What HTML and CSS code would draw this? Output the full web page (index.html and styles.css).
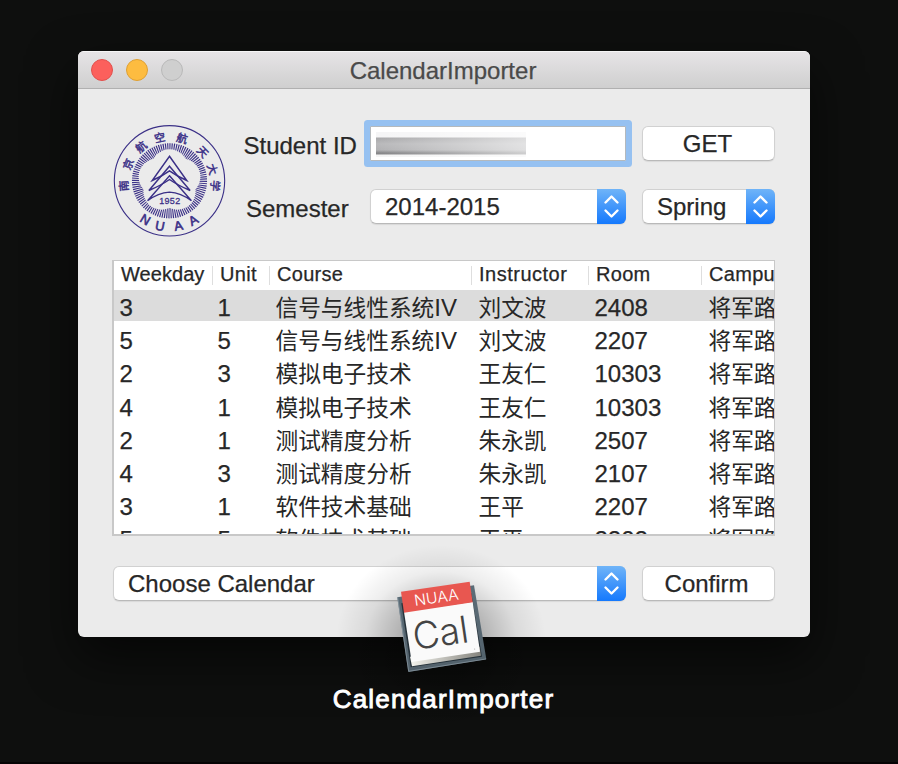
FILE: index.html
```
<!DOCTYPE html>
<html lang="en">
<head>
<meta charset="utf-8">
<title>CalendarImporter</title>
<link rel="stylesheet" href="styles.css">
</head>
<body>
<main class="window">
  <header class="titlebar">
    <div class="lights"><i class="light close"></i><i class="light minimize"></i><i class="light disabled"></i></div>
    <h1 class="title">CalendarImporter</h1>
  </header>
  <section class="form">
    <svg class="logo" viewBox="24 30 340 340">
      <g fill="none" stroke="#3b3087">
        <circle cx="194" cy="198" r="166" stroke-width="3.4"/>
        <circle cx="194" cy="198" r="97" stroke-width="32" stroke-dasharray="3.2 2.88"/>
      </g>
      <g fill="#ebebeb">
        <circle cx="194" cy="198" r="60"/>
        <circle cx="194" cy="158" r="55"/><circle cx="232" cy="186" r="55"/><circle cx="156" cy="186" r="55"/>
        <circle cx="217.500" cy="230" r="55"/><circle cx="170.500" cy="230" r="55"/>
      </g>
      <g fill="none" stroke="#3b3087" stroke-width="4.400">
        <path d="M194 124 246 197Q216 184 194 168Q172 184 142 197Z"/>
        <path d="M194 154 256 227Q220 212 194 194Q168 212 132 227Z"/>
        <path d="M194 183 260 258Q228 234 194 232Q160 234 128 258Z"/>
      </g>
      <g class="logo-text">
        <text class="year" x="195" y="267">1952</text>
        <text class="hanzi" transform="translate(57 213) rotate(-94)" y="12">南</text>
        <text class="hanzi" transform="translate(70 148) rotate(-68)" y="12">京</text>
        <text class="hanzi" transform="translate(109 96) rotate(-40)" y="12">航</text>
        <text class="hanzi" transform="translate(165 68) rotate(-12)" y="12">空</text>
        <text class="hanzi" transform="translate(232 70) rotate(16)" y="12">航</text>
        <text class="hanzi" transform="translate(294 111) rotate(46)" y="12">天</text>
        <text class="hanzi" transform="translate(323 163) rotate(72)" y="12">大</text>
        <text class="hanzi" transform="translate(331 213) rotate(94)" y="12">学</text>
        <text class="nuaa" transform="translate(121 315) rotate(31)" y="13">N</text>
        <text class="nuaa" transform="translate(165 334) rotate(11)" y="13">U</text>
        <text class="nuaa" transform="translate(221 334) rotate(-11)" y="13">A</text>
        <text class="nuaa" transform="translate(266 317) rotate(-30)" y="13">A</text>
      </g>
    </svg>
    <div class="fields">
      <label class="label id-label">Student ID</label>
      <div class="input"><span class="redacted"></span></div>
      <button class="button">GET</button>
      <label class="label semester-label">Semester</label>
      <div class="select">2014-2015<span class="stepper"><svg viewBox="0 0 28 35"><path d="M8 13.500 14 7.500 20 13.500M8 21.500 14 27.500 20 21.500"/></svg></span></div>
      <div class="select">Spring<span class="stepper"><svg viewBox="0 0 28 35"><path d="M8 13.500 14 7.500 20 13.500M8 21.500 14 27.500 20 21.500"/></svg></span></div>
    </div>
  </section>
  <section class="table">
    <div class="row head"><span>Weekday</span><span>Unit</span><span>Course</span><span>Instructor</span><span>Room</span><span>Campus</span></div>
    <div class="row selected"><span>3</span><span>1</span><span class="cjk">信号与线性系统<b>IV</b></span><span class="cjk">刘文波</span><span>2408</span><span class="cjk">将军路</span></div>
    <div class="row"><span>5</span><span>5</span><span class="cjk">信号与线性系统<b>IV</b></span><span class="cjk">刘文波</span><span>2207</span><span class="cjk">将军路</span></div>
    <div class="row"><span>2</span><span>3</span><span class="cjk">模拟电子技术</span><span class="cjk">王友仁</span><span>10303</span><span class="cjk">将军路</span></div>
    <div class="row"><span>4</span><span>1</span><span class="cjk">模拟电子技术</span><span class="cjk">王友仁</span><span>10303</span><span class="cjk">将军路</span></div>
    <div class="row"><span>2</span><span>1</span><span class="cjk">测试精度分析</span><span class="cjk">朱永凯</span><span>2507</span><span class="cjk">将军路</span></div>
    <div class="row"><span>4</span><span>3</span><span class="cjk">测试精度分析</span><span class="cjk">朱永凯</span><span>2107</span><span class="cjk">将军路</span></div>
    <div class="row"><span>3</span><span>1</span><span class="cjk">软件技术基础</span><span class="cjk">王平</span><span>2207</span><span class="cjk">将军路</span></div>
    <div class="row"><span>5</span><span>5</span><span class="cjk">软件技术基础</span><span class="cjk">王平</span><span>2202</span><span class="cjk">将军路</span></div>
  </section>
  <footer class="actions">
    <div class="select">Choose Calendar<span class="stepper"><svg viewBox="0 0 28 35"><path d="M8 13.500 14 7.500 20 13.500M8 21.500 14 27.500 20 21.500"/></svg></span></div>
    <button class="button">Confirm</button>
  </footer>
</main>
<div class="app-shadow"></div>
<svg class="app-icon" viewBox="0 0 420 375">
  <defs>
    <linearGradient id="pages" x1="0" y1="0" x2="1" y2="0"><stop offset="0" stop-color="#f4f4ee"/><stop offset="1" stop-color="#85847e"/></linearGradient>
    <linearGradient id="back" x1="0" y1="0" x2="0" y2="1"><stop offset="0" stop-color="#5b6c77"/><stop offset="1" stop-color="#52616b"/></linearGradient>
  </defs>
  <path d="M82 112 312 76 349 298 115 336Z" fill="url(#back)"/>
  <path d="M83 112 116 334 348 297" fill="none" stroke="#84939c" stroke-width="2.500"/>
  <path d="M94 130 122 322 336 290 304 100Z" fill="#26323a"/>
  <path d="M120 290 126 319 333 287 329 260Z" fill="url(#pages)"/>
  <path d="M102 155 308 125 330 275 125 306Z" fill="#fafafa"/>
  <path d="M93 95 299 65 308 127 102 158Z" fill="#e85750"/>
  <text class="icon-nuaa" transform="translate(135 138) rotate(-8.300)" textLength="134" lengthAdjust="spacingAndGlyphs">NUAA</text>
  <text class="icon-cal" transform="translate(134 270) rotate(-8.300)" textLength="168" lengthAdjust="spacingAndGlyphs">Cal</text>
  <circle cx="314" cy="267" r="1.500" fill="#999"/>
</svg>
<p class="app-name">CalendarImporter</p>
</body>
</html>
```
FILE: styles.css
```
* { box-sizing: border-box; }
body {
  margin: 0;
  height: 764px;
  padding-top: 51px;
  position: relative;
  overflow: hidden;
  background: #0e0f0e;
  border-bottom: 2px solid #050304;
  color: #272727;
  font: 24px/28px "Liberation Sans", "Noto Sans CJK SC", sans-serif;
}
.window {
  width: 732px;
  height: 586px;
  margin-left: 78px;
  background: #ebebeb;
  border-radius: 6px;
  overflow: hidden;
  box-shadow: 0 20px 50px rgba(0,0,0,.6);
  -webkit-text-stroke: .25px;
}
.titlebar {
  position: relative;
  height: 38px;
  display: flex;
  align-items: center;
  justify-content: center;
  background: linear-gradient(#e6e4e6, #cfcfcf);
  border-top: 1px solid #f5f5f5;
  border-bottom: 1px solid #b0b0b0;
}
.lights { position: absolute; left: 13px; top: 7px; display: flex; gap: 13px; }
.light { width: 22px; height: 22px; border-radius: 50%; border: 1px solid; }
.close { background: #fc605c; border-color: #e2504d; }
.minimize { background: #fdbc40; border-color: #dfa033; }
.disabled { background: #cfcfcf; border-color: #b9b9b9; }
.title { margin: 2px 2px 0 0; font-size: 24px; font-weight: 400; color: #4a4a4a; }
.form { display: flex; height: 171px; padding: 35px 35px 0; }
.logo { width: 113px; height: 113px; flex: none; margin-top: 1px; -webkit-text-stroke: 0; }
.logo-text { fill: #3b3087; text-anchor: middle; }
.year { font-size: 27px; letter-spacing: 1px; stroke: #3b3087; stroke-width: .8; }
.hanzi { font-family: "Noto Sans CJK SC", sans-serif; font-size: 33px; stroke: #3b3087; stroke-width: 1.4; }
.nuaa { font-size: 39px; stroke: #3b3087; stroke-width: 1.8; }
.fields {
  width: 549px;
  display: grid;
  grid-template-columns: 144px 256px 149px;
  grid-template-rows: 35px 35px;
  align-content: start;
  gap: 28px 0;
  padding-top: 2px;
}
.fields > :nth-child(3n) { margin-left: 16px; width: 133px; }
.label { padding-top: 6px; }
.id-label { padding-left: 17.5px; white-space: nowrap; }
.semester-label { padding-left: 20px; }
.input {
  height: 35px;
  padding: 5px;
  background: #fff;
  border: 1px solid #b4b9bd;
  box-shadow: 0 0 0 6px #96c1f1;
  border-radius: 1px;
}
.redacted {
  display: block;
  width: 150px;
  height: 25px;
  background: linear-gradient(90deg, transparent, rgba(255,255,255,.6)), linear-gradient(#f5f5f6 0 5px, #a9a9ab 6px, #b9b9bb 12px, #b2b2b4 18px, #858587 21px, #858587 22px, #f4f4f4 23px);
}
.button, .select {
  position: relative;
  height: 35px;
  border: 1px solid #d1d1d1;
  border-bottom-color: #b9b9b9;
  border-radius: 6px;
  background: #fff;
  color: #272727;
  font: inherit;
}
.button { padding: 0 4px 0 0; line-height: 33px; box-shadow: 0 1px 1px rgba(0,0,0,.08); }
.fields .button { padding-right: 2px; }
.select { padding-left: 14px; line-height: 34px; box-shadow: 0 1px 1px rgba(0,0,0,.08); }
.stepper {
  position: absolute;
  right: -1px;
  top: -1px;
  width: 29px;
  height: 35px;
  border-radius: 0 6px 6px 0;
  background: linear-gradient(#6fb4f8, #1579fd);
}
.stepper svg { display: block; width: 29px; height: 35px; fill: none; stroke: #fff; stroke-width: 2.4; stroke-linecap: round; stroke-linejoin: round; }
.table {
  height: 276px;
  width: 663px;
  margin-left: 34px;
  overflow: hidden;
  background: #fff;
  border: 1px solid #c8c8c8;
  border-left-width: 2px;
  border-bottom-width: 2px;
}
.row {
  display: grid;
  grid-template-columns: 98px 58px 203px 116px 114px 110px;
  height: 33.2px;
  padding-left: 5.5px;
  line-height: 35px;
  white-space: nowrap;
}
.row span { height: 33px; }
.row .cjk { font-size: 22.7px; line-height: 36.5px; -webkit-text-stroke: 0; }
.cjk b { font-weight: 400; font-size: 24px; }
.head {
  grid-template-columns: 99px 57px 202px 117px 113px 110px;
  height: 29px;
  padding-left: 7px;
  font-size: 20px;
  line-height: 27px;
  letter-spacing: .3px;
}
.head span:first-child { letter-spacing: .05px; }
.head span:nth-child(4) { letter-spacing: .5px; }
.head span + span { position: relative; }
.head span + span::before { content: ""; position: absolute; left: -8px; top: 5px; width: 1px; height: 19px; background: #dedede; }
.selected { background: linear-gradient(#dcdcdc 0 31.5px, #fff 31.5px); }
.actions { display: flex; gap: 16px; padding: 29.5px 35px 0; }
.actions .select { width: 514px; }
.actions .button { width: 133px; }
.app-shadow {
  position: absolute;
  left: 336px;
  top: 545px;
  width: 210px;
  height: 190px;
  background: radial-gradient(closest-side, rgba(0,0,0,.38), rgba(0,0,0,.24) 40%, rgba(0,0,0,.07) 72%, transparent);
}
.app-icon { position: absolute; left: 370px; top: 560px; width: 140px; height: 125px; }
.icon-nuaa { font: 300 46px Inter, sans-serif; fill: #fff; }
.icon-cal { font: 300 112px Inter, sans-serif; fill: #444; }
.app-name {
  position: relative;
  margin: 47px 0 0;
  padding-right: 11px;
  text-align: center;
  color: #fff;
  font-size: 26px;
  line-height: 30px;
  letter-spacing: 1.2px;
  -webkit-text-stroke: .9px #fff;
}
```
